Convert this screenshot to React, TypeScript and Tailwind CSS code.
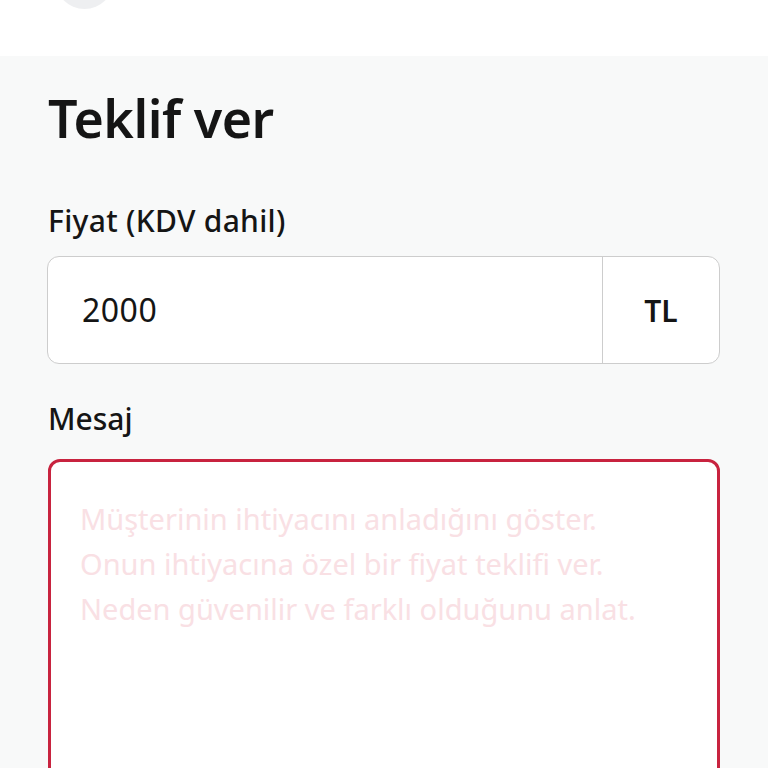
export default function App() {
  return (
    <div className="min-h-[768px] bg-[#f8f9f9] font-['Noto_Sans',sans-serif] text-[#151515]">
      {/* top header strip */}
      <div className="h-[56px] bg-white overflow-hidden">
        <div className="ml-[55px] -mt-[50px] h-[59px] w-[59px] rounded-full bg-[#eeeff1]" />
      </div>

      <div className="px-[48px] pt-[26px]">
        <h1 className="text-[52px] font-semibold leading-[72px] tracking-[-0.5px]">Teklif ver</h1>

        <label className="mt-[50px] block text-[30px] font-medium leading-[34px] tracking-[0.3px]">Fiyat (KDV dahil)</label>
        <div className="mt-[18px] flex h-[108px] -ml-px rounded-[12px] border border-[#cdcdcd] bg-white">
          <div className="flex flex-1 items-center pl-[34px] text-[32px] leading-none tracking-[0.5px]">2000</div>
          <div className="flex w-[117px] items-center justify-center border-l border-[#cdcdcd] text-[30px] font-semibold">TL</div>
        </div>

        <label className="mt-[38px] block text-[30px] font-medium leading-[34px]">Mesaj</label>
        <div className="mt-[23px] h-[400px] rounded-[12px] border-[3px] border-[#c8233f] bg-white pl-[29px] pt-[34px] text-[29px] leading-[45px] text-[#f9e0e4]">
          <p>Müşterinin ihtiyacını anladığını göster.</p>
          <p>Onun ihtiyacına özel bir fiyat teklifi ver.</p>
          <p>Neden güvenilir ve farklı olduğunu anlat.</p>
        </div>
      </div>
    </div>
  );
}
